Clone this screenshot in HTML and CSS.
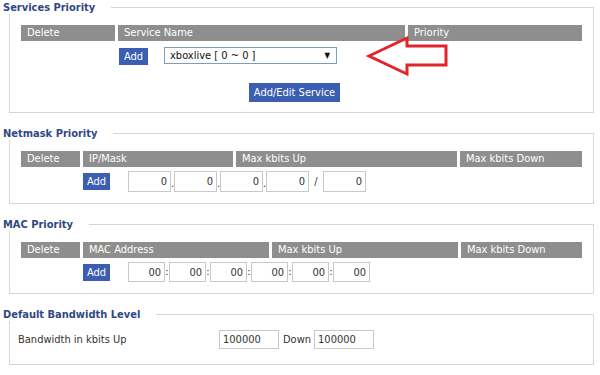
FILE: index.html
```html
<!DOCTYPE html>
<html lang="en">
<head>
  <meta charset="UTF-8">
  <title>QoS Priority</title>
  <link rel="stylesheet" href="styles.css">
</head>
<body>

<!-- Services Priority -->
<fieldset class="group group-services">
  <legend>Services Priority</legend>
  <div class="grid grid-services">
    <div class="th">Delete</div>
    <div class="th">Service Name</div>
    <div class="th">Priority</div>
    <div></div>
    <div class="row-cell svc-row">
      <button class="btn btn-add">Add</button>
      <div class="select">xboxlive [ 0 ~ 0 ]<span class="caret">&#9660;</span></div>
    </div>
    <svg class="arrow" width="86" height="44" viewBox="0 0 86 44">
      <path d="M4 21 L42 3 L42 11 L81 11 L81 30 L42 30 L42 39 Z" fill="none" stroke="#e0262b" stroke-width="3"/>
    </svg>
  </div>
  <div class="actions">
    <button class="btn btn-edit">Add/Edit Service</button>
  </div>
</fieldset>

<!-- Netmask Priority -->
<fieldset class="group">
  <legend>Netmask Priority</legend>
  <div class="grid grid-netmask">
    <div class="th">Delete</div>
    <div class="th">IP/Mask</div>
    <div class="th">Max kbits Up</div>
    <div class="th">Max kbits Down</div>
    <div></div>
    <div class="row-cell">
      <button class="btn btn-add">Add</button>
      <input class="num ip" type="text" value="0"><span class="sep">.</span>
      <input class="num ip" type="text" value="0"><span class="sep">.</span>
      <input class="num ip" type="text" value="0"><span class="sep">.</span>
      <input class="num ip" type="text" value="0"><span class="sep slash">/</span>
      <input class="num ip" type="text" value="0">
    </div>
  </div>
</fieldset>

<!-- MAC Priority -->
<fieldset class="group">
  <legend>MAC Priority</legend>
  <div class="grid grid-mac">
    <div class="th">Delete</div>
    <div class="th">MAC Address</div>
    <div class="th">Max kbits Up</div>
    <div class="th">Max kbits Down</div>
    <div></div>
    <div class="row-cell">
      <button class="btn btn-add">Add</button>
      <input class="num mac" type="text" value="00"><span class="sep">:</span>
      <input class="num mac" type="text" value="00"><span class="sep">:</span>
      <input class="num mac" type="text" value="00"><span class="sep">:</span>
      <input class="num mac" type="text" value="00"><span class="sep">:</span>
      <input class="num mac" type="text" value="00"><span class="sep">:</span>
      <input class="num mac" type="text" value="00">
    </div>
  </div>
</fieldset>

<!-- Default Bandwidth Level -->
<fieldset class="group group-bw">
  <legend>Default Bandwidth Level</legend>
  <div class="bw-row">
    <span class="bw-label">Bandwidth in kbits Up</span>
    <input class="bw" type="text" value="100000">
    <span class="bw-down">Down</span>
    <input class="bw" type="text" value="100000">
  </div>
</fieldset>

</body>
</html>
```

FILE: styles.css
```css
* {
  box-sizing: border-box;
}

body {
  margin: 0;
  background: #fff;
  color: #333;
  font-family: "DejaVu Sans Condensed", "DejaVu Sans", Verdana, sans-serif;
  font-stretch: condensed;
  font-size: 11px;
}

/* Section boxes */
.group {
  margin: 13px 6px 0 9px;
  padding: 0 0 11px 0;
  border: 1px solid #d6d6d6;
  min-width: 0;
}

.group-services {
  margin-top: 0;
  padding-bottom: 10px;
}

.group legend {
  margin-left: -7px;
  padding: 1px 16px 0 0;
  background: #fff;
  color: #2f4884;
  font-weight: bold;
  font-size: 11px;
  line-height: 13px;
}

/* Header grid */
.grid {
  position: relative;
  display: grid;
  margin: 11px 11px 0 11px;
  column-gap: 3px;
  row-gap: 4px;
}

.grid-services {
  grid-template-columns: 94px 287px 174px;
  row-gap: 6px;
}

.grid-netmask {
  grid-template-columns: 59px 150px 221px 122px;
}

.grid-mac {
  grid-template-columns: 59px 186px 186px 121px;
}

.th {
  height: 16px;
  padding-left: 6px;
  background: #8e8e8e;
  color: #fff;
  line-height: 16px;
  white-space: nowrap;
}

.row-cell {
  grid-column: 2 / -1;
  display: flex;
  align-items: flex-start;
}

.svc-row {
  height: 18px;
  padding-left: 1px;
}

/* Buttons */
.btn {
  border: none;
  background: #3b5db2;
  color: #fff;
  font-family: inherit;
  font-stretch: condensed;
  font-size: 11px;
  padding: 0;
  cursor: pointer;
}

.btn-add {
  width: 27px;
  height: 17px;
  margin-top: 2px;
  margin-right: 18px;
}

.svc-row .btn-add {
  width: 29px;
  margin-top: 1px;
  margin-right: 16px;
}

.actions {
  padding-left: 239px;
  margin-top: 18px;
}

.btn-edit {
  width: 91px;
  height: 19px;
}

/* Fake dropdown */
.select {
  width: 173px;
  height: 17px;
  display: flex;
  justify-content: space-between;
  align-items: center;
  padding: 0 6px 0 5px;
  border: 1px solid #7f9db9;
  background: #fff;
  color: #111;
}

.caret {
  font-size: 8px;
  color: #111;
}

/* Red annotation arrow */
.arrow {
  position: absolute;
  left: 344px;
  top: 10px;
}

/* Number inputs */
.num {
  height: 21px;
  padding: 0 3px 0 0;
  border: 1px solid #c8c8c8;
  font-family: inherit;
  font-stretch: condensed;
  font-size: 11px;
  color: #333;
  text-align: right;
}

.ip {
  width: 43px;
}

.mac {
  width: 37px;
  height: 20px;
}

.sep {
  width: 3px;
  align-self: flex-end;
  line-height: 16px;
  text-align: center;
}

.mac + .sep {
  width: 4px;
  align-self: center;
}

.sep.slash {
  width: 14px;
  align-self: center;
}

/* Default bandwidth */
.group-bw {
  padding-bottom: 15px;
}

.bw-row {
  display: flex;
  align-items: center;
  padding: 9px 0 0 8px;
}

.bw-label {
  width: 201px;
}

.bw {
  width: 60px;
  height: 19px;
  padding: 0 0 0 3px;
  border: 1px solid #c8c8c8;
  font-family: inherit;
  font-stretch: condensed;
  font-size: 11px;
  color: #333;
}

.bw-down {
  margin: 0 3px 0 4px;
}
```
